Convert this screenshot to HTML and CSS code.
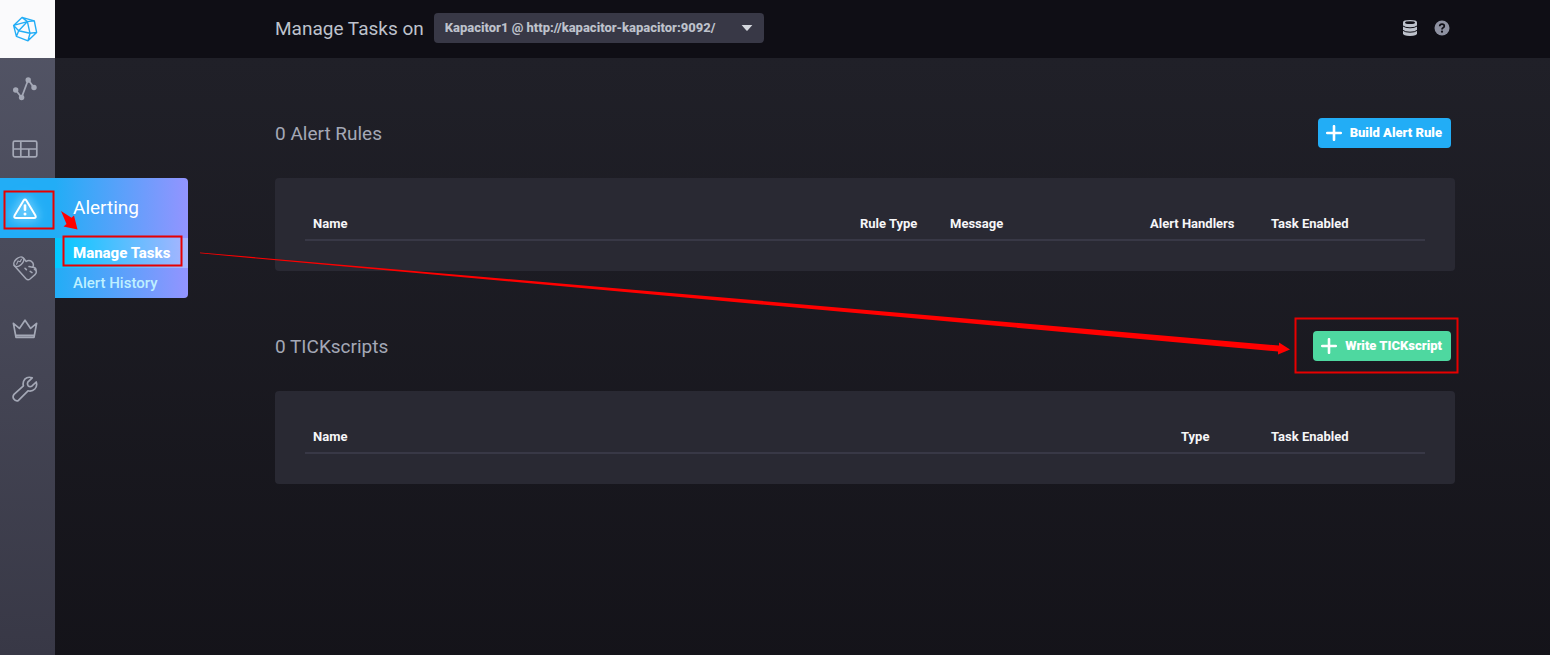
FILE: index.html
```html
<!DOCTYPE html>
<html lang="en">
<head>
<meta charset="utf-8">
<title>Manage Tasks</title>
<link rel="stylesheet" href="styles.css">
</head>
<body>
<div class="app">
  <nav class="sidebar" aria-label="Main">
    <a class="logo" href="#" aria-label="Home">
      <svg class="nav-icon" viewBox="0 0 26 26" fill="none" stroke="#22adf6" stroke-width="1.4" stroke-linejoin="round"><path d="M10 1.4 22.3 4.8 24.6 16.4 16 24.8 4.4 20.4 1.6 9.4ZM10 1.4 15.4 5.6 22.3 4.8M15.4 5.6 1.6 9.4M15.4 5.6 18 17.3 24.6 16.4M15.4 5.6 6.7 14.7 18 17.3 16 24.8M1.6 9.4 6.7 14.7 4.4 20.4"/></svg>
    </a>
    <a class="nav-item" href="#" aria-label="Explore">
      <svg class="nav-icon" viewBox="0 0 26 26" fill="currentColor"><path d="M3.7 14 9.6 21.5 16.2 3.8 22 11.6" fill="none" stroke="currentColor" stroke-width="1.8"/><circle cx="3.7" cy="14" r="2.7"/><circle cx="9.6" cy="21.5" r="2.7"/><circle cx="16.2" cy="4" r="2.7"/><circle cx="22" cy="11.5" r="2.7"/></svg>
    </a>
    <a class="nav-item" href="#" aria-label="Dashboards">
      <svg class="nav-icon" viewBox="0 0 26 26" fill="none" stroke="currentColor" stroke-width="1.7"><rect x="1.2" y="5.2" width="23.6" height="15.6" rx="1.5"/><path d="M1.2 13H24.8M8.8 5V21M16.8 13V21"/></svg>
    </a>
    <div class="nav-group">
      <a class="nav-item nav-item-active" href="#" aria-label="Alerting">
        <svg class="nav-icon" viewBox="0 0 26 26" fill="none" stroke="currentColor" stroke-linejoin="round" stroke-linecap="round"><path d="M13 3.6Q13.8 3.6 14.4 4.6L23.4 19.6Q24.4 22 22 22H4Q1.6 22 2.6 19.6L11.6 4.6Q12.2 3.6 13 3.6Z" stroke-width="2"/><path d="M13 9.6V13.8" stroke-width="2.6"/><circle cx="13" cy="18" r="0.8" stroke-width="1.4"/></svg>
      </a>
      <div class="flyout">
        <a class="flyout-title" href="#">Alerting</a>
        <a class="flyout-link flyout-link-active" href="#">Manage Tasks</a>
        <a class="flyout-link" href="#">Alert History</a>
      </div>
    </div>
    <a class="nav-item" href="#" aria-label="Log Viewer">
      <svg class="nav-icon" viewBox="0 0 26 26" fill="none" stroke="currentColor" stroke-width="1.5" stroke-linejoin="round" stroke-linecap="round"><ellipse cx="6.8" cy="5.8" rx="5.8" ry="3.6" transform="rotate(-42 6.8 5.8)"/><path d="M2.2 9.6 14 22.8Q16 24.6 18 23L23 18.6Q25.2 16.6 23.8 14.4L22.4 13.2M11.4 2 14.2 5.4Q16.8 3.6 19.2 5.2L20.8 6.8Q22.2 9.4 20.4 11.2L17 10.6M20.4 11.2Q24 11 24.2 14.6M13 12.2 14.4 13.6M18.2 15.4 20 16.6"/><path d="M4.6 8.2 6 5 8.2 5.8 9.4 3.2" stroke-width="1.1"/></svg>
    </a>
    <a class="nav-item" href="#" aria-label="Admin">
      <svg class="nav-icon" viewBox="0 0 26 26" fill="none" stroke="currentColor" stroke-width="1.7" stroke-linejoin="round"><path d="M4 21.4 1.4 7.4 7.4 12.4 13 4.2 18.6 12.4 24.6 7.4 22 21.4ZM4 19.4H22"/></svg>
    </a>
    <a class="nav-item" href="#" aria-label="Configuration">
      <svg class="nav-icon" viewBox="0 0 26 26" fill="none" stroke="currentColor" stroke-width="1.7" stroke-linejoin="round"><path d="M20.2 1.8Q15.8.2 12.8 3.2 10.4 6 11.4 9.8L2 18.4Q.4 20.4 1.6 22.8 3.4 25.4 6.2 24.6L16 14.8Q20 15.8 22.8 13 25.6 10 24.2 6L19.8 10.2Q17.6 11 16.2 9.8 15 8.2 15.8 6.2Z"/></svg>
    </a>
  </nav>

  <div class="page">
    <header class="page-header">
      <h1 class="page-title"><label for="kapacitor">Manage Tasks on</label></h1>
      <div class="source-picker">
        <select id="kapacitor" class="source-select">
          <option>Kapacitor1 @ http://kapacitor-kapacitor:9092/</option>
        </select>
        <svg class="caret" viewBox="0 0 12 6"><path d="M.6 0H11.4L6.6 5.6Q6 6 5.4 5.6Z" fill="currentColor"/></svg>
      </div>
      <div class="header-tools">
        <button class="tool" type="button" aria-label="Sources">
          <svg class="tool-icon" viewBox="0 0 16 16"><path d="M1 2.2Q1 0 8 0T15 2.2V13.6Q15 16 8 16T1 13.6Z" fill="#bec2cc"/><ellipse cx="8" cy="2.7" rx="5" ry="1.4" fill="#0f0e15"/><path d="M1 6Q3 7.8 8 7.8T15 6M1 10.4Q3 12.2 8 12.2T15 10.4" fill="none" stroke="#0f0e15"/></svg>
        </button>
        <button class="tool" type="button" aria-label="Help">
          <svg class="tool-icon" viewBox="0 0 16 16"><circle cx="8" cy="8" r="7.5" fill="#8e91a1"/><path d="M5.7 6.3Q5.7 4.2 8 4.2T10.3 6.1Q10.3 7.2 9.1 7.8 8 8.4 8 9.5" fill="none" stroke="#0f0e15" stroke-width="1.7"/><circle cx="8" cy="11.7" r="1.1" fill="#0f0e15"/></svg>
        </button>
      </div>
    </header>

    <main class="content">
      <section class="section">
        <div class="section-head">
          <h2 class="section-title">0 Alert Rules</h2>
          <button class="btn btn-primary" type="button"><svg class="plus" viewBox="0 0 16 16"><path d="M8 1.2V14.8M1.2 8H14.8" stroke="currentColor" stroke-width="2.6" stroke-linecap="round"/></svg>Build Alert Rule</button>
        </div>
        <div class="panel">
          <table class="table">
            <thead><tr><th>Name</th><th class="col-type">Rule Type</th><th class="col-message">Message</th><th class="col-handlers">Alert Handlers</th><th class="col-enabled">Task Enabled</th></tr></thead>
          </table>
        </div>
      </section>
      <section class="section">
        <div class="section-head">
          <h2 class="section-title">0 TICKscripts</h2>
          <button class="btn btn-success" type="button"><svg class="plus" viewBox="0 0 16 16"><path d="M8 1.2V14.8M1.2 8H14.8" stroke="currentColor" stroke-width="2.6" stroke-linecap="round"/></svg>Write TICKscript</button>
        </div>
        <div class="panel">
          <table class="table">
            <thead><tr><th>Name</th><th class="col-type">Type</th><th class="col-enabled">Task Enabled</th></tr></thead>
          </table>
        </div>
      </section>
    </main>
  </div>

  <svg class="annotations" width="1550" height="655" viewBox="0 0 1550 655" aria-hidden="true">
    <g fill="none" stroke="#e80000" stroke-width="2">
      <rect x="4.5" y="191.5" width="49" height="37"/>
      <rect x="63.5" y="236.5" width="118" height="29"/>
      <rect x="1295.5" y="318.5" width="162" height="54"/>
    </g>
    <path fill="#f00" d="M61 211 71.5 217.7 74 215.5 77.5 229.5 63.5 226.5 66.5 224Z"/>
    <path fill="#f00" d="M200 252.5 1279 345.5 1279 342.5 1290 349.5 1278 354.5 1278 351.5 200 253.3Z"/>
  </svg>
</div>
</body>
</html>
```
FILE: styles.css
```css
* {
  box-sizing: border-box;
}

body {
  margin: 0;
  font-family: Roboto, "Liberation Sans", sans-serif;
  font-size: 13px;
  color: #f6f6f8;
  background: #0f0e15;
}

a {
  color: inherit;
  text-decoration: none;
}

.app {
  position: relative;
  display: flex;
  min-height: 100vh;
  overflow: hidden;
}

.sidebar {
  flex: none;
  width: 55px;
  color: #a4a8b6;
  background: linear-gradient(#545667, #383846);
}

.logo,
.nav-item {
  display: flex;
  align-items: center;
  height: 60px;
  padding: 2px 0 0 12px;
}

.logo {
  height: 58px;
  padding-top: 0;
  background: #fafafc;
}

.nav-icon {
  width: 26px;
  height: 26px;
}

.nav-group {
  position: relative;
}

.nav-item-active {
  color: #fff;
  background: #22adf6;
}

.nav-item-active .nav-icon {
  filter: drop-shadow(0 0 4px #9cf) drop-shadow(0 0 6px #6bdfff);
}

.flyout {
  position: absolute;
  top: 0;
  left: 100%;
  white-space: nowrap;
  color: #fff;
  background: linear-gradient(to right, #22adf6, #9394ff);
  border-radius: 0 4px 4px 0;
}

.flyout-title {
  display: block;
  padding: 0 18px;
  font-size: 19px;
  line-height: 60px;
}

.flyout-link {
  display: block;
  padding: 0 18px;
  font-size: 15px;
  font-weight: 500;
  line-height: 30px;
  color: #bef0ff;
}

.flyout-link-active {
  font-weight: 800;
  color: #fff;
  background: linear-gradient(to right, #00c9ff, #a9b4ff);
}

.page {
  flex: 1;
  min-width: 0;
  background: linear-gradient(#202028, #131218) 0 58px no-repeat;
}

.page-header {
  display: flex;
  align-items: center;
  gap: 10px;
  height: 58px;
  padding: 0 100px 2px 220px;
  background: #0f0e15;
}

.page-title,
.section-title {
  margin: 0;
  font-size: 19px;
  font-weight: 400;
}

.page-title {
  color: #bec2cc;
}

.source-picker {
  position: relative;
  width: 330px;
}

.source-select {
  appearance: none;
  display: block;
  width: 100%;
  height: 30px;
  padding: 0 30px 2px 11px;
  font: 800 13px Roboto, "Liberation Sans", sans-serif;
  color: #bec2cc;
  background: #383846;
  border: 0;
  border-radius: 4px;
}

.caret {
  position: absolute;
  top: 12px;
  right: 11px;
  width: 12px;
  height: 6px;
  color: #d4d7dd;
  pointer-events: none;
}

.header-tools {
  display: flex;
  gap: 16px;
  margin-left: auto;
}

.tool {
  display: flex;
  padding: 0;
  background: none;
  border: 0;
}

.tool-icon {
  width: 16px;
  height: 16px;
}

.content {
  display: flex;
  flex-direction: column;
  gap: 60px;
  padding: 60px 95px 60px 220px;
}

.section {
  display: flex;
  flex-direction: column;
  gap: 30px;
}

.section-head {
  display: flex;
  align-items: center;
  justify-content: space-between;
  padding-right: 4px;
}

.section-title {
  color: #a4a8b6;
}

.btn {
  display: flex;
  align-items: center;
  gap: 8px;
  height: 30px;
  padding: 0 9px 1px 8px;
  font: 900 13px Roboto, "Liberation Sans", sans-serif;
  color: #fff;
  border: 0;
  border-radius: 4px;
}

.btn-primary {
  background: #22adf6;
}

.btn-success {
  background: #4ed8a0;
}

.plus {
  width: 16px;
  height: 16px;
}

.panel {
  padding: 30px;
  background: #292933;
  border-radius: 4px;
}

.table {
  width: 100%;
  table-layout: fixed;
  border-collapse: separate;
  border-spacing: 0;
}

.table th {
  height: 33px;
  padding: 0 8px;
  font-weight: 700;
  text-align: left;
  border-bottom: 2px solid #383846;
}

.table .col-type {
  width: 90px;
}

.table .col-message {
  width: 200px;
}

.table .col-handlers {
  width: 121px;
}

.table .col-enabled {
  width: 162px;
}

.annotations {
  position: absolute;
  top: 0;
  left: 0;
  pointer-events: none;
}
```
